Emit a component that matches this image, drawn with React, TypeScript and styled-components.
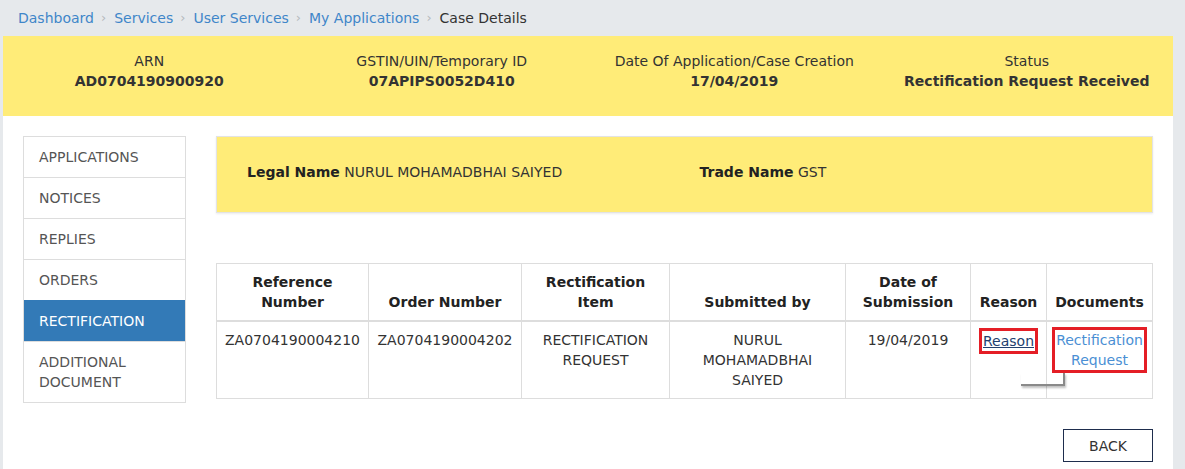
import React from "react";
import styled, { createGlobalStyle } from "styled-components";

const GlobalStyle = createGlobalStyle`
  html, body { margin: 0; padding: 0; }
  body {
    background: #e6e9ec;
    font-family: "DejaVu Sans", Verdana, sans-serif;
    font-size: 14px;
    color: #333;
  }
  * { box-sizing: border-box; }
`;

const Page = styled.div`
  width: 1185px;
  padding: 0 12px 0 3px;
`;

const Breadcrumb = styled.nav`
  height: 36px;
  display: flex;
  align-items: center;
  padding-left: 15px;
  padding-bottom: 1px;
`;

const Crumb = styled.a<{ $current?: boolean }>`
  color: ${(p) => (p.$current ? "#333" : "#3f86c9")};
  text-decoration: none;
`;

const Sep = styled.span`
  color: #b5b9bd;
  font-size: 13px;
  margin: 0 8px 0 7px;
`;

const InfoBand = styled.div`
  background: #ffec78;
  height: 80px;
  display: grid;
  grid-template-columns: repeat(4, 1fr);
  padding-top: 15px;
`;

const InfoCell = styled.div`
  text-align: center;
  line-height: 20px;
`;

const InfoValue = styled.div`
  font-weight: bold;
`;

const Content = styled.div`
  background: #fff;
  padding: 20px 21px 20px 20px;
  display: flex;
  gap: 30px;
  min-height: 353px;
`;

const SideMenu = styled.ul`
  list-style: none;
  margin: 0;
  padding: 0;
  width: 163px;
  flex: none;
  align-self: flex-start;
  border: 1px solid #dddddd;
`;

const MenuItem = styled.li<{ $active?: boolean }>`
  padding: 10px 15px;
  line-height: 20px;
  border-top: 1px solid ${(p) => (p.$active ? "#337ab7" : "#dddddd")};
  background: ${(p) => (p.$active ? "#337ab7" : "#fff")};
  color: ${(p) => (p.$active ? "#fff" : "#555")};
  text-transform: uppercase;
  &:first-child { border-top: none; }
`;

const Main = styled.div`
  flex: 1;
  display: flex;
  flex-direction: column;
`;

const NameBox = styled.div`
  background: #ffec78;
  border: 1px solid #e3e3e3;
  box-shadow: 0 1px 2px rgba(0, 0, 0, 0.08);
  height: 77px;
  display: grid;
  grid-template-columns: 1fr 1fr;
  align-items: center;
  padding: 0 15px 6px;
`;

const NameField = styled.div`
  padding: 0 15px;
  color: #333;
  & b { color: #222; }
`;

const Table = styled.table`
  margin-top: 50px;
  width: 100%;
  table-layout: fixed;
  border-collapse: collapse;
  border: 1px solid #dddddd;
`;

const Th = styled.th<{ $w: number }>`
  width: ${(p) => p.$w}px;
  border: 1px solid #dddddd;
  border-bottom: 2px solid #dddddd;
  padding: 8px 4px 8px;
  vertical-align: bottom;
  text-align: center;
  line-height: 20px;
  color: #222;
`;

const Td = styled.td`
  border: 1px solid #dddddd;
  padding: 8px 4px;
  vertical-align: top;
  text-align: center;
  line-height: 20px;
  height: 77px;
  color: #333;
`;

const DocCell = styled(Td)`
  position: relative;
`;

const Highlight = styled.span<{ $mt: number }>`
  display: inline-block;
  border: 3px solid #e41e26;
  padding: 0 1px;
  margin-top: ${(p) => p.$mt}px;
`;

const ReasonLink = styled.a`
  color: #24406e;
  text-decoration: underline;
`;

const DocLink = styled.a`
  color: #4a8fd4;
  text-decoration: none;
`;

const Connector = styled.span`
  position: absolute;
  left: -26px;
  top: 51px;
  width: 44px;
  height: 13px;
  border-right: 2px solid #8a8a8a;
  border-bottom: 2px solid #8a8a8a;
  box-shadow: 1px 2px 2px rgba(0, 0, 0, 0.25);
`;

const Actions = styled.div`
  display: flex;
  justify-content: flex-end;
  margin-top: 30px;
`;

const BackButton = styled.button`
  width: 90px;
  height: 33px;
  background: #fff;
  border: 1px solid #1e2d4d;
  font-family: "DejaVu Sans", Verdana, sans-serif;
  font-size: 14px;
  color: #333;
  text-transform: uppercase;
  cursor: pointer;
`;

const crumbs = ["Dashboard", "Services", "User Services", "My Applications"];
const menu = ["Applications", "Notices", "Replies", "Orders", "Rectification", "Additional Document"];

export default function App() {
  return (
    <Page>
      <GlobalStyle />
      <Breadcrumb>
        {crumbs.map((c) => (
          <React.Fragment key={c}>
            <Crumb href="#">{c}</Crumb>
            <Sep>›</Sep>
          </React.Fragment>
        ))}
        <Crumb $current>Case Details</Crumb>
      </Breadcrumb>
      <InfoBand>
        <InfoCell>
          <div>ARN</div>
          <InfoValue>AD0704190900920</InfoValue>
        </InfoCell>
        <InfoCell>
          <div>GSTIN/UIN/Temporary ID</div>
          <InfoValue>07APIPS0052D410</InfoValue>
        </InfoCell>
        <InfoCell>
          <div>Date Of Application/Case Creation</div>
          <InfoValue>17/04/2019</InfoValue>
        </InfoCell>
        <InfoCell>
          <div>Status</div>
          <InfoValue>Rectification Request Received</InfoValue>
        </InfoCell>
      </InfoBand>
      <Content>
        <SideMenu>
          {menu.map((m) => (
            <MenuItem key={m} $active={m === "Rectification"}>
              {m}
            </MenuItem>
          ))}
        </SideMenu>
        <Main>
          <NameBox>
            <NameField>
              <b>Legal Name</b> NURUL MOHAMADBHAI SAIYED
            </NameField>
            <NameField>
              <b>Trade Name</b> GST
            </NameField>
          </NameBox>
          <Table>
            <thead>
              <tr>
                <Th $w={152}>Reference Number</Th>
                <Th $w={153}>Order Number</Th>
                <Th $w={148}>Rectification Item</Th>
                <Th $w={176}>Submitted by</Th>
                <Th $w={125}>Date of Submission</Th>
                <Th $w={76}>Reason</Th>
                <Th $w={106}>Documents</Th>
              </tr>
            </thead>
            <tbody>
              <tr>
                <Td>ZA0704190004210</Td>
                <Td>ZA0704190004202</Td>
                <Td>RECTIFICATION REQUEST</Td>
                <Td>
                  NURUL
                  <br />
                  MOHAMADBHAI
                  <br />
                  SAIYED
                </Td>
                <Td>19/04/2019</Td>
                <Td>
                  <Highlight $mt={-2}>
                    <ReasonLink href="#">Reason</ReasonLink>
                  </Highlight>
                </Td>
                <DocCell>
                  <Highlight $mt={-3}>
                    <DocLink href="#">
                      Rectification
                      <br />
                      Request
                    </DocLink>
                  </Highlight>
                  <Connector />
                </DocCell>
              </tr>
            </tbody>
          </Table>
          <Actions>
            <BackButton>Back</BackButton>
          </Actions>
        </Main>
      </Content>
    </Page>
  );
}
